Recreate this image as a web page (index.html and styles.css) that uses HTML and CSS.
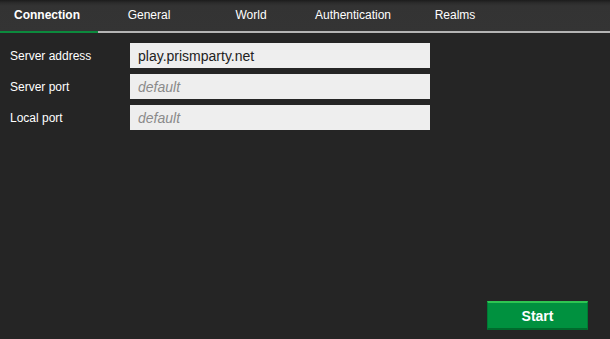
FILE: index.html
```html
<!DOCTYPE html>
<html>
<head>
<meta charset="utf-8">
<link rel="stylesheet" href="styles.css">
</head>
<body>
<div class="app">
  <nav class="tabbar">
    <div class="tab active">Connection</div>
    <div class="tab">General</div>
    <div class="tab">World</div>
    <div class="tab">Authentication</div>
    <div class="tab">Realms</div>
  </nav>
  <main class="content">
    <div class="form">
      <div class="row">
        <label class="label">Server address</label>
        <input class="field" type="text" value="play.prismparty.net">
      </div>
      <div class="row">
        <label class="label">Server port</label>
        <input class="field" type="text" placeholder="default">
      </div>
      <div class="row">
        <label class="label">Local port</label>
        <input class="field" type="text" placeholder="default">
      </div>
    </div>
    <div class="actions">
      <button class="start">Start</button>
    </div>
  </main>
</div>
</body>
</html>
```
FILE: styles.css
```css
* { box-sizing: border-box; }
html, body {
  margin: 0;
  padding: 0;
  height: 100%;
  background: #252525;
  font-family: "Liberation Sans", Arial, sans-serif;
  color: #fff;
}
.app {
  height: 339px;
  display: flex;
  flex-direction: column;
}
.tabbar {
  display: flex;
  height: 33px;
  background: linear-gradient(to bottom, #1c1c1c 0px, #2c2c2c 3px, #333333 6px, #343434 100%);
  border-bottom: 2px solid #b4b4b4;
}
.tab {
  width: 98px;
  margin-right: 4px;
  padding-right: 4px;
  height: 33px;
  line-height: 31px;
  text-align: center;
  font-size: 12px;
  color: #fff;
}
.tab.active {
  font-weight: bold;
  border-bottom: 2px solid #0c8a3d;
}
.content {
  flex: 1;
  display: flex;
  flex-direction: column;
  justify-content: space-between;
  padding: 10px 22px 9px 10px;
}
.form {
  display: flex;
  flex-direction: column;
  gap: 6px;
}
.row {
  display: flex;
  align-items: center;
}
.label {
  width: 120px;
  font-size: 12px;
  color: #fff;
}
.field {
  width: 300px;
  height: 25px;
  margin: 0;
  border: none;
  outline: none;
  background: #eeeeee;
  padding: 0 8px;
  font-family: "Liberation Sans", Arial, sans-serif;
  font-size: 14px;
  color: #222;
}
.field::placeholder {
  color: #8a8a8a;
  font-style: italic;
}
.actions {
  display: flex;
  justify-content: flex-end;
}
.start {
  width: 101px;
  height: 29px;
  margin: 0;
  padding: 0;
  background: #00913f;
  border-top: 2px solid #2ec552;
  border-bottom: 2px solid #006a2c;
  border-left: 1px solid #007a34;
  border-right: 1px solid #007a34;
  color: #fff;
  font-family: "Liberation Sans", Arial, sans-serif;
  font-weight: bold;
  font-size: 14px;
}
```
